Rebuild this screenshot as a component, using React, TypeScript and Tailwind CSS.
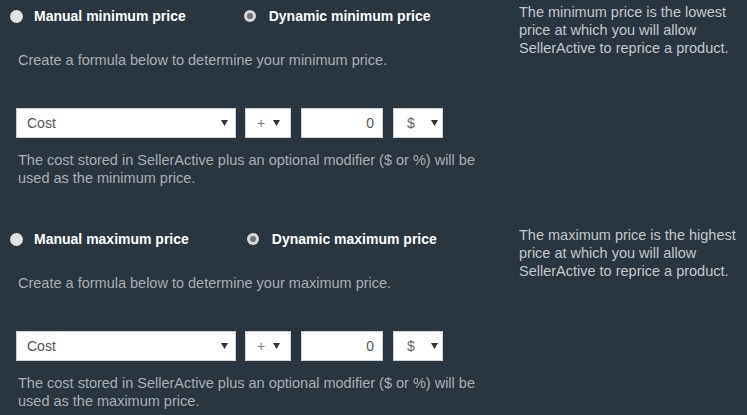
import React from "react";

function Radio({ checked }: { checked?: boolean }) {
  return checked ? (
    <span className="flex h-[12px] w-[12px] shrink-0 items-center justify-center rounded-full bg-[#d9d9d9]">
      <span className="h-[6px] w-[6px] rounded-full bg-[#6f6f6f]" />
    </span>
  ) : (
    <span className="h-[13px] w-[13px] shrink-0 rounded-full bg-[#e3e3e3]" />
  );
}

function Arrow() {
  return (
    <svg width="7" height="6" viewBox="0 0 7 6" className="shrink-0">
      <polygon points="0,0 7,0 3.5,6" fill="#333" />
    </svg>
  );
}

function Section({ kind, desc }: { kind: string; desc: string }) {
  return (
    <div className="flex">
      <div className="w-[519px] shrink-0 pt-[6px]">
        <div className="flex h-[20px] items-center pl-[10px]">
          <Radio />
          <span className="ml-[11px] text-[14px] font-bold text-white">Manual {kind} price</span>
          <span className="ml-[58px]">
            <Radio checked />
          </span>
          <span className="ml-[13px] text-[14px] font-bold text-white">Dynamic {kind} price</span>
        </div>
        <div className="mt-[25px] pl-[18px] text-[14.5px] leading-[18px] text-[#a9aeb3]">
          Create a formula below to determine your {kind} price.
        </div>
        <div className="mt-[39px] flex h-[30px] pl-[16px] text-[14px]">
          <div className="flex w-[220px] items-center justify-between border border-[#d0d0d0] bg-white pl-[10px] pr-[7px] text-[#555]">
            <span>Cost</span>
            <Arrow />
          </div>
          <div className="ml-[9px] flex w-[46px] items-center border border-[#d0d0d0] bg-white pl-[11px] text-[#777]">
            <span className="text-[14px]">+</span>
            <span className="ml-[8px]">
              <Arrow />
            </span>
          </div>
          <div className="ml-[10px] flex w-[82px] items-center justify-end border border-[#d0d0d0] bg-white pr-[8px] text-[#555]">
            0
          </div>
          <div className="ml-[10px] flex w-[50px] items-center border border-[#d0d0d0] bg-white pl-[13px] text-[#666]">
            <span>$</span>
            <span className="ml-[16px]">
              <Arrow />
            </span>
          </div>
        </div>
        <div className="mt-[13px] w-[490px] pl-[18px] text-[14.5px] leading-[18px] text-[#a9aeb3]">
          The cost stored in SellerActive plus an optional modifier ($ or %) will be used as the {kind} price.
        </div>
      </div>
      <div className="w-[228px] pt-[3px] text-[14.5px] leading-[18px] text-[#c3c7cb]">{desc}</div>
    </div>
  );
}

export default function App() {
  return (
    <div
      className="h-[415px] w-[747px] overflow-hidden bg-[#29353f]"
      style={{ fontFamily: '"Liberation Sans", Arial, sans-serif' }}
    >
      <Section
        kind="minimum"
        desc="The minimum price is the lowest price at which you will allow SellerActive to reprice a product."
      />
      <div className="mt-[36px]">
        <Section
          kind="maximum"
          desc="The maximum price is the highest price at which you will allow SellerActive to reprice a product."
        />
      </div>
    </div>
  );
}
